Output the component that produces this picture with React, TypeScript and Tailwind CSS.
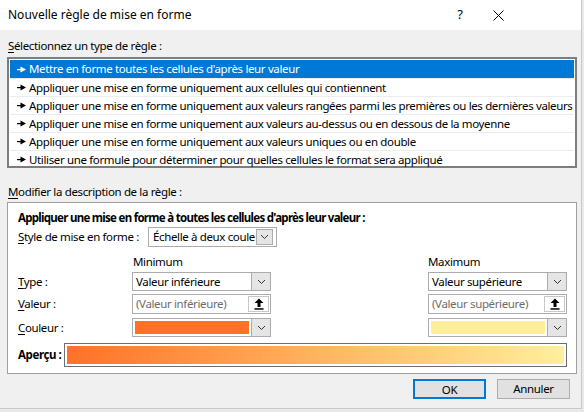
import React from "react";

const F = { fontFamily: '"Noto Sans", "Open Sans", sans-serif' };

function Arrow({ white }: { white?: boolean }) {
  const c = white ? "#ffffff" : "#000000";
  return (
    <svg width="9" height="7" viewBox="0 0 9 7" className="shrink-0">
      <rect x="0" y="3" width="4" height="1.2" fill={c} />
      <path d="M3.5 0.5 L9 3.5 L3.5 6.5 Z" fill={c} />
    </svg>
  );
}

function Chevron() {
  return (
    <svg width="9" height="6" viewBox="0 0 9 6">
      <path d="M1 1 L4.5 4.5 L8 1" fill="none" stroke="#333" strokeWidth="1" />
    </svg>
  );
}

function Upload() {
  return (
    <svg width="10" height="12" viewBox="0 0 10 12">
      <path d="M5 0.5 L9.5 5 L6.5 5 L6.5 9 L3.5 9 L3.5 5 L0.5 5 Z" fill="#000" />
      <rect x="0.5" y="10.2" width="9" height="1.5" fill="#000" />
    </svg>
  );
}

function DropBtn() {
  return (
    <div className="w-[19px] self-stretch bg-[#e5e5e5] border-l border-[#acacac] flex items-center justify-center">
      <Chevron />
    </div>
  );
}

function Select({ text }: { text: string }) {
  return (
    <div className="w-[139px] h-[19px] border border-[#acacac] bg-white flex items-stretch">
      <div className="flex-1 pl-[3px] flex items-center text-black overflow-hidden whitespace-nowrap">{text}</div>
      <DropBtn />
    </div>
  );
}

function ValInput({ text }: { text: string }) {
  return (
    <div className="w-[139px] h-[20px] border border-[#acacac] bg-white flex items-stretch">
      <div className="flex-1 pl-[3px] flex items-center text-[#6d6d6d] whitespace-nowrap overflow-hidden">{text}</div>
      <div className="w-[21px] m-[1px] border border-[#c8c8c8] bg-white flex items-center justify-center">
        <Upload />
      </div>
    </div>
  );
}

function ColorSel({ color }: { color: string }) {
  return (
    <div className="w-[139px] h-[19px] border border-[#acacac] bg-white flex items-stretch">
      <div className="flex-1 p-[2px]">
        <div className="w-full h-full" style={{ background: color }} />
      </div>
      <DropBtn />
    </div>
  );
}

const rows = [
  "Mettre en forme toutes les cellules d'après leur valeur",
  "Appliquer une mise en forme uniquement aux cellules qui contiennent",
  "Appliquer une mise en forme uniquement aux valeurs rangées parmi les premières ou les dernières valeurs",
  "Appliquer une mise en forme uniquement aux valeurs au-dessus ou en dessous de la moyenne",
  "Appliquer une mise en forme uniquement aux valeurs uniques ou en double",
  "Utiliser une formule pour déterminer pour quelles cellules le format sera appliqué",
];

export default function App() {
  return (
    <div
      className="w-[584px] h-[412px] bg-[#e9e9e9] overflow-hidden text-[11.5px] tracking-[-0.36px] text-black"
      style={F}
    >
      <div className="w-[582px] h-[409px] bg-[#f0f0f0] flex flex-col border-r border-b border-[#c9c9c9]">
        {/* Title bar */}
        <div className="h-[30px] bg-white flex items-center pl-[8px] shrink-0">
          <span className="text-[12px] tracking-normal">Nouvelle règle de mise en forme</span>
          <span className="ml-auto w-[20px] text-center text-[13px] mr-[23px]">?</span>
          <svg width="11" height="11" viewBox="0 0 11 11" className="mr-[77px]">
            <path d="M0.5 0.5 L10.5 10.5 M10.5 0.5 L0.5 10.5" stroke="#000" strokeWidth="1" />
          </svg>
        </div>

        <div className="pl-[7px] pr-[6px] flex flex-col">
          <div className="h-[16px] mt-[8px] leading-[16px] pl-[1px] whitespace-nowrap">
            <span className="underline underline-offset-2">S</span>électionnez un type de règle :
          </div>
          <div className="mt-[3px] h-[111px] w-[570px] border-2 border-[#7d7d7d] bg-white p-[1px] flex flex-col">
            {rows.map((r, i) => (
              <div
                key={i}
                className={`h-[18px] shrink-0 flex items-center gap-[3px] pl-[7px] whitespace-nowrap overflow-hidden ${
                  i === 0 ? "bg-[#0078d7] text-white" : "border-t border-[#ececec]"
                }`}
              >
                <Arrow white={i === 0} />
                <span>{r}</span>
              </div>
            ))}
          </div>

          <div className="h-[16px] mt-[16px] leading-[16px] pl-[1px] whitespace-nowrap">
            <span className="underline underline-offset-2">M</span>odifier la description de la règle :
          </div>

          <div className="mt-[2px] h-[172px] w-[570px] border border-[#a0a0a0] bg-white flex flex-col pl-[10px]">
            <div className="mt-[7px] h-[16px] leading-[16px] font-bold tracking-[-0.72px] whitespace-nowrap">
              Appliquer une mise en forme à toutes les cellules d'après leur valeur :
            </div>
            <div className="flex items-center mt-[1px] h-[20px]">
              <div className="w-[130px] whitespace-nowrap">
                <span className="underline underline-offset-2">S</span>tyle de mise en forme :
              </div>
              <div className="w-[129px] h-[20px] border border-[#acacac] bg-white flex items-stretch">
                <div className="w-[106px] pl-[4px] flex items-center overflow-hidden whitespace-nowrap">Échelle à deux coule</div>
                <div className="w-[17px] m-[1px] border border-[#acacac] bg-[#e5e5e5] flex items-center justify-center">
                  <Chevron />
                </div>
              </div>
            </div>

            <div className="flex h-[16px] mt-[7px] leading-[16px]">
              <div className="ml-[115px] w-[295px]">Minimum</div>
              <div>Maximum</div>
            </div>

            <div className="flex items-center mt-[2px]">
              <div className="w-[114px]">
                <span className="underline underline-offset-2">T</span>ype :
              </div>
              <Select text="Valeur inférieure" />
              <div className="w-[157px]" />
              <Select text="Valeur supérieure" />
            </div>

            <div className="flex items-center mt-[3px]">
              <div className="w-[114px]">
                <span className="underline underline-offset-2">V</span>aleur :
              </div>
              <ValInput text="(Valeur inférieure)" />
              <div className="w-[157px]" />
              <ValInput text="(Valeur supérieure)" />
            </div>

            <div className="flex items-center mt-[4px]">
              <div className="w-[114px]">
                <span className="underline underline-offset-2">C</span>ouleur :
              </div>
              <ColorSel color="#ff7128" />
              <div className="w-[157px]" />
              <ColorSel color="#ffef9c" />
            </div>

            <div className="flex items-center mt-[6px]">
              <div className="w-[46px] font-bold tracking-[-0.4px] whitespace-nowrap">Aperçu :</div>
              <div className="w-[503px] h-[24px] border border-[#6e6e6e] p-[2px] bg-white">
                <div
                  className="w-full h-full"
                  style={{ background: "linear-gradient(to right, #ff7128, #ffb35f 50%, #ffef9c)" }}
                />
              </div>
            </div>
          </div>

          <div className="flex justify-end gap-[11px] mt-[5px] pr-[5px]">
            <button className="w-[73px] h-[20px] border-2 border-[#0078d7] bg-[#e1e1e1]">OK</button>
            <button className="w-[73px] h-[20px] border border-[#adadad] bg-[#e1e1e1]">Annuler</button>
          </div>
        </div>
      </div>
    </div>
  );
}
